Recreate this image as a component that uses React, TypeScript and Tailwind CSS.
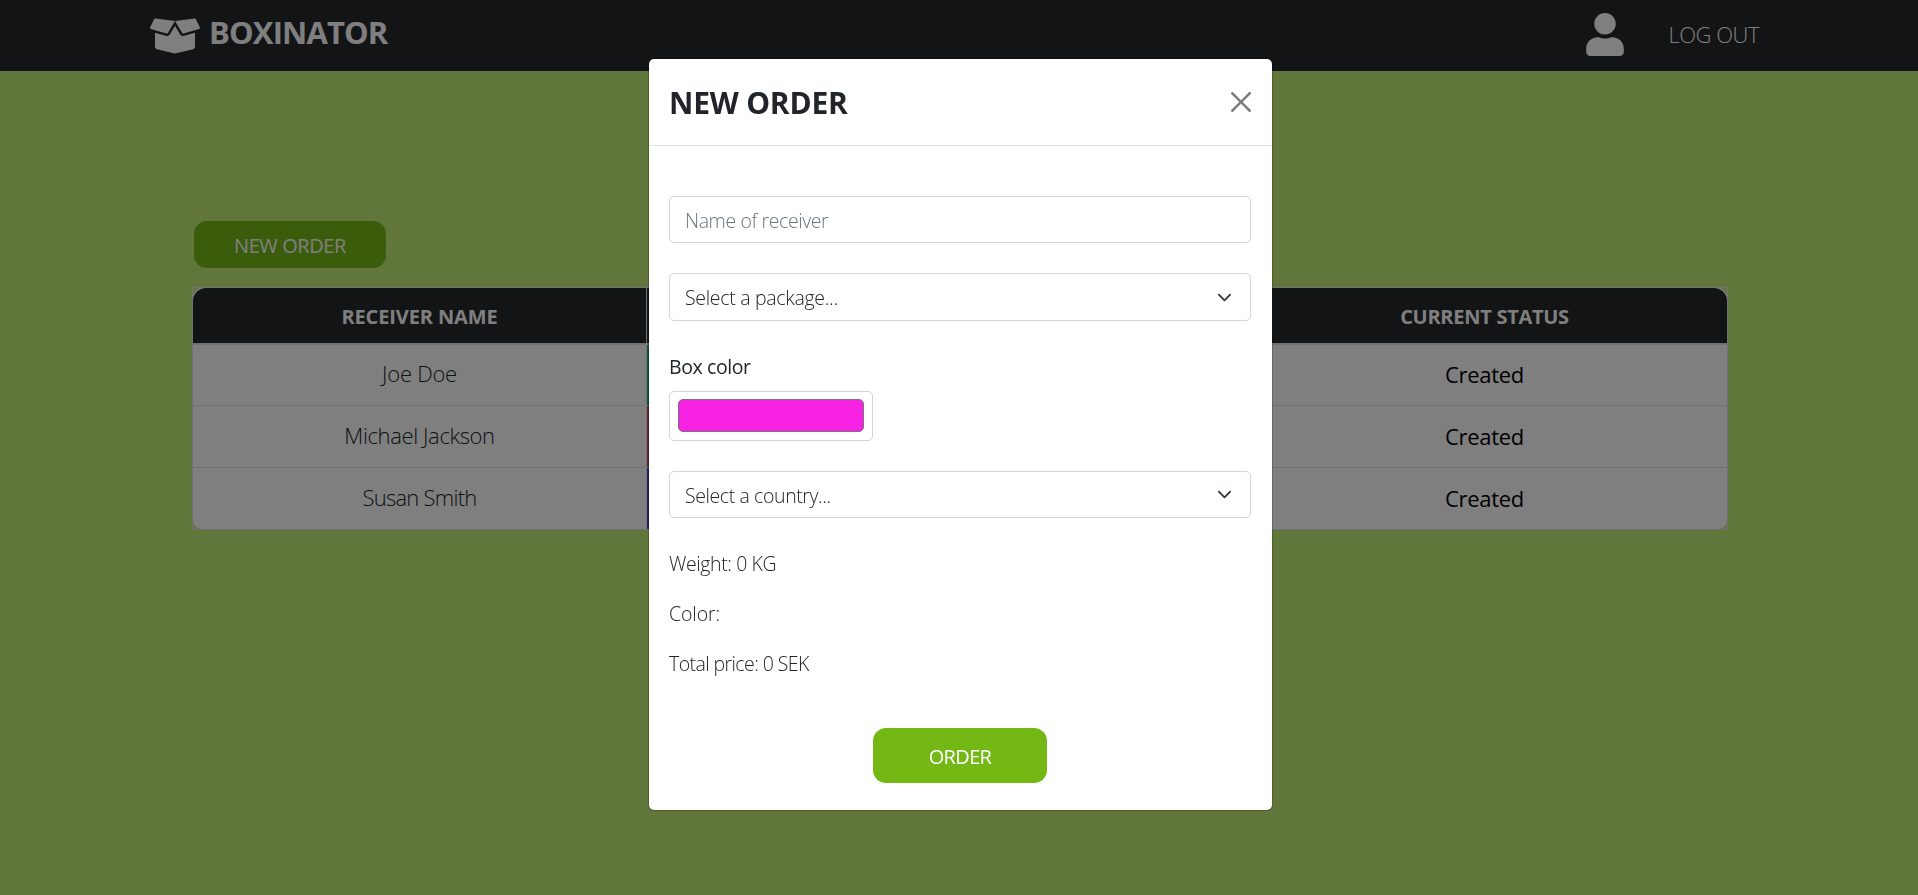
import { FaBoxOpen, FaUser } from "react-icons/fa";

const orders = [
  { name: "Joe Doe", color: "bg-[#2fa97c]", height: "h-[60px]", tracking: "tracking-[-0.26px]" },
  { name: "Michael Jackson", color: "bg-[#c84c4c]", height: "h-[61px]", tracking: "tracking-[-0.38px]" },
  { name: "Susan Smith", color: "bg-[#3f49c9]", height: "h-[61px]", tracking: "tracking-[-0.75px]" },
];

function Navbar() {
  return (
    <header className="flex h-[71px] items-center justify-between bg-[#24282b] pr-[159px] pl-[150px] text-white">
      <div className="flex items-center">
        <FaBoxOpen className="h-10 w-[50px]" />
        <span className="-mt-[7px] ml-[9px] text-[31px] leading-10 font-bold tracking-[-0.85px]">BOXINATOR</span>
      </div>
      <div className="flex items-center">
        <FaUser className="mb-[2px] h-[43px] w-[38px]" />
        <a className="mb-[3px] ml-[44px] text-[22px] leading-[34px] font-light tracking-[-0.47px]">LOG OUT</a>
      </div>
    </header>
  );
}

function OrdersTable() {
  const columns = "grid grid-cols-[453px_160px_1fr_485px]";
  return (
    <div className="mt-[19px] border border-[#dee2e6]">
      <div className="rounded-t-[9px] rounded-b-[8px] bg-white">
        <div className={`${columns} h-[55px] text-center text-[20px] leading-[53px] font-bold text-white`}>
          <div className="rounded-tl-[13px] bg-[#24282b] pt-[2px] tracking-[-0.12px]">RECEIVER NAME</div>
          <div className="border-l border-[#dee2e6] bg-[#24282b]" />
          <div className="bg-[#24282b]" />
          <div className="rounded-tr-[13px] bg-[#24282b] pt-[2px] tracking-[-0.28px]">CURRENT STATUS</div>
        </div>
        <div className="h-[2px] bg-[#dee2e6]" />
        {orders.map((order, i) => (
          <div key={order.name} className={`${columns} ${i > 0 ? "border-t border-[#dee2e6] box-content" : ""} ${order.height} text-[22px]`}>
            <div className={`flex items-center justify-center pb-[3px] font-light text-[#212529] ${order.tracking}`}>{order.name}</div>
            <div className={`border-l border-[#dee2e6] ${order.color}`} />
            <div />
            <div className="flex items-center justify-center pb-px tracking-[-0.32px] text-black">Created</div>
          </div>
        ))}
      </div>
    </div>
  );
}

function Select({ label, className }: { label: string; className: string }) {
  return (
    <div className={`flex items-center justify-between rounded-[5px] border border-[#ced4da] pr-[18px] pl-[15px] text-[19.5px] font-light text-[#212529] ${className}`}>
      <span className="pt-[2px]">{label}</span>
      <svg className="size-[15px]" viewBox="0 0 16 16" fill="none" stroke="#343a40" strokeWidth="2" strokeLinecap="round" strokeLinejoin="round">
        <path d="m2 5 6 6 6-6" />
      </svg>
    </div>
  );
}

function OrderModal() {
  return (
    <div className="h-[753px] w-[625px] rounded-[6px] border border-black/20 bg-white bg-clip-padding text-[#212529]">
      <div className="flex h-[87px] items-center justify-between border-b border-[#dee2e6] pr-[21px] pl-5">
        <h2 className="text-[30px] font-bold tracking-[-0.21px]">NEW ORDER</h2>
        <svg className="size-5 opacity-50" viewBox="0 0 16 16" fill="#000">
          <path d="M.293.293a1 1 0 011.414 0L8 6.586 14.293.293a1 1 0 111.414 1.414L9.414 8l6.293 6.293a1 1 0 01-1.414 1.414L8 9.414l-6.293 6.293a1 1 0 01-1.414-1.414L6.586 8 .293 1.707a1 1 0 010-1.414z" />
        </svg>
      </div>
      <div className="flex flex-col pt-[50px] pr-[21px] pl-5 text-[19.5px] font-light">
        <input
          placeholder="Name of receiver"
          className="h-[47px] rounded-[5px] border border-[#ced4da] px-[15px] pt-px tracking-[-0.4px] placeholder:text-[#6c757d] placeholder:opacity-100"
        />
        <Select label="Select a package..." className="mt-[30px] h-12 tracking-[-0.3px]" />
        <label className="mt-[31px] text-[19.5px] leading-[30px] font-normal tracking-[-0.4px]">Box color</label>
        <div className="mt-[9px] h-[50px] w-[204px] rounded-[5px] border border-[#ced4da] px-2 pt-[7px]">
          <div className="h-[33px] rounded-[5px] border border-[#767676] bg-[#f722e3]" />
        </div>
        <Select label="Select a country..." className="mt-[30px] h-[47px] tracking-[-0.4px]" />
        <p className="mt-[31px] leading-[30px] tracking-[-0.4px]">Weight: 0 KG</p>
        <p className="mt-5 leading-[30px] tracking-[-0.1px]">Color:</p>
        <p className="mt-5 leading-[30px] tracking-[-0.58px]">Total price: 0 SEK</p>
        <button className="mt-[49px] ml-[204px] h-[55px] w-[174px] rounded-[13px] bg-[#74b816] pt-[2px] text-[20px] font-normal tracking-[-0.65px] text-white">ORDER</button>
      </div>
    </div>
  );
}

export default function App() {
  return (
    <div className="h-[895px] overflow-hidden bg-[#c1ed76] font-['Open_Sans',sans-serif]">
      <Navbar />
      <main className="pt-[150px] pr-[190px] pl-[192px]">
        <button className="ml-[2px] block h-[47px] w-48 rounded-[13px] bg-[#74b816] pt-[2px] text-[20px] tracking-[-0.42px] text-white">NEW ORDER</button>
        <OrdersTable />
      </main>
      <div className="fixed inset-0 flex items-start bg-black/50 pt-[58px] pl-[648px]">
        <OrderModal />
      </div>
    </div>
  );
}
